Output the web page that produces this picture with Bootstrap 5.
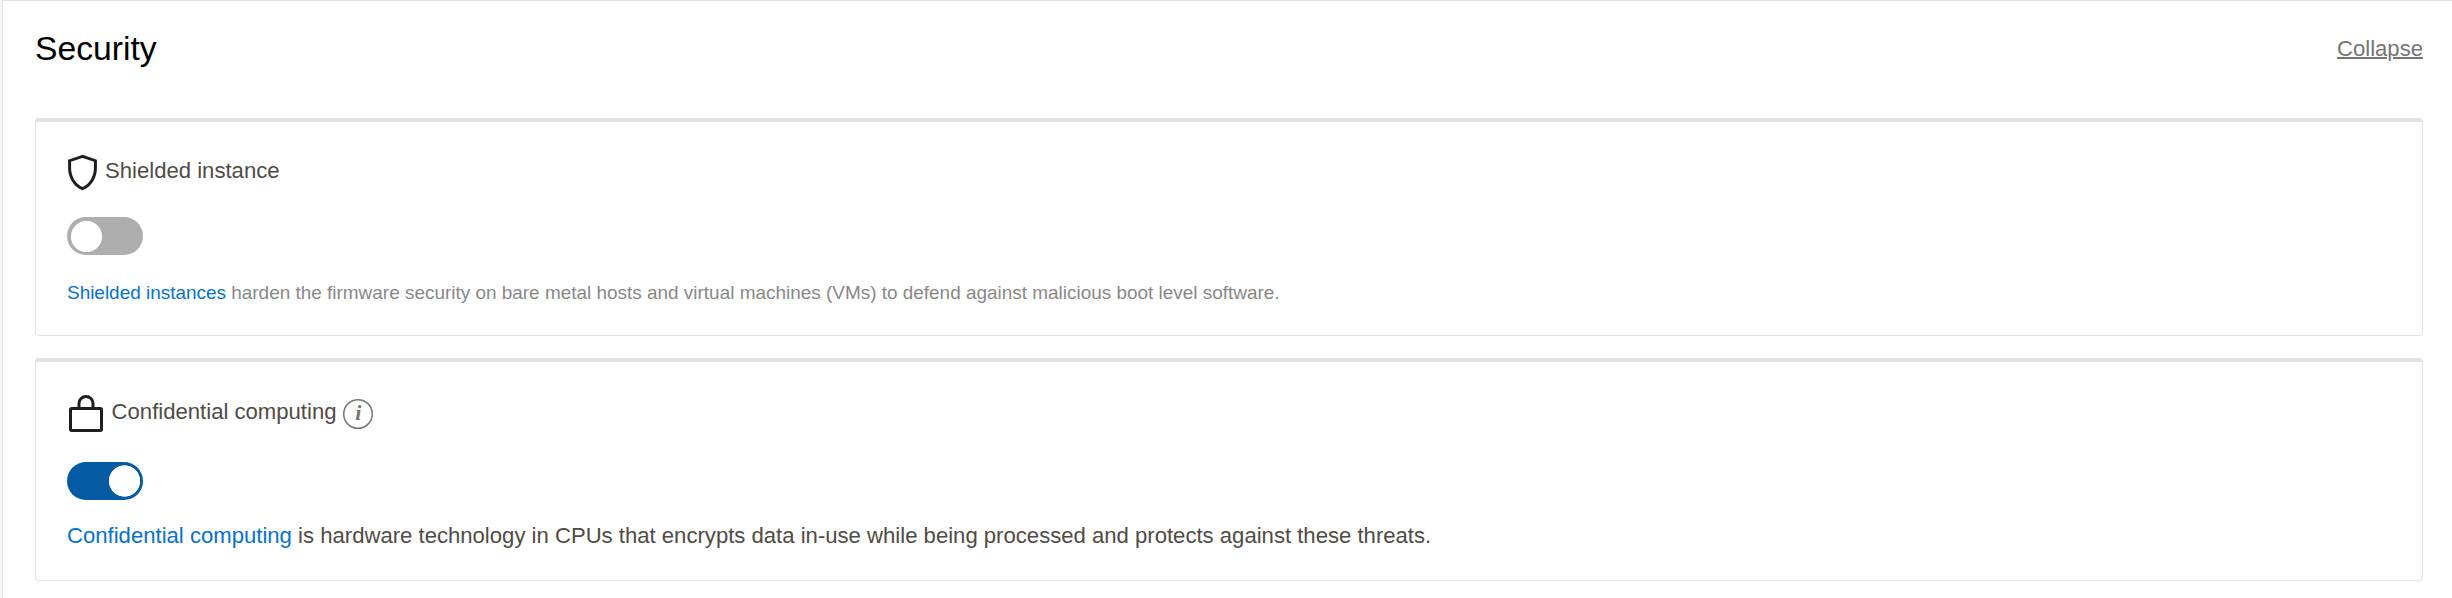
<!DOCTYPE html>
<html lang="en">
<head>
<meta charset="utf-8">
<title>Security</title>
<link href="https://cdn.jsdelivr.net/npm/bootstrap@5.3.0/dist/css/bootstrap.min.css" rel="stylesheet">
<style>
body { font-family: "Liberation Sans", Arial, sans-serif; font-size: 22.11px; line-height: 30px; color: #504b46; background: #f5f5f6; overflow: hidden; }
a { color: #0572ce; }
.panel { height: 598px; margin-left: 2px; border-left: 1px solid #dfe1e5; border-top: 1px solid #dfe1e5; background: #fff; padding: 0 29px 0 32px; }
.panel-head { height: 117px; padding-top: 28px; }
.panel-head h2 { font-size: 33.7px; line-height: 38px; color: #000; font-weight: 400; }
.collapse-link { color: #757575; margin-top: 5px; text-decoration-thickness: 2px; }
.opt { border: 1px solid #e0e2e5; border-top-width: 4px; border-radius: 4px; padding: 0 31px; }
.opt-shield { height: 218px; margin-bottom: 22px; }
.opt-lock { height: 223px; }
.opt-title { height: 38px; margin-top: 32px; }
.opt-shield .title-text { margin-top: 2px; }
.opt-lock .title-text { margin-top: 3px; }
.opt .form-switch .form-check-input { width: 76px; height: 38px; border: 0; border-radius: 19px; background: #aeaeae radial-gradient(circle at 19.5px 19.5px, #fff 15.2px, transparent 15.9px) 0 0 / 100% 100%; }
.opt .form-switch .form-check-input:checked { background-color: #045aa3; background-image: radial-gradient(circle at 57.5px 19px, #fff 15.3px, transparent 16px); }
.opt-shield .form-switch { margin-top: 25px; }
.opt-lock .form-switch { margin-top: 30px; }
.hint { font-size: 18.95px; color: #888; padding-top: 23px; }
.desc { padding-top: 21px; }
svg { display: block; flex: none; }
.info { margin: 4px 0 0 5px; }
.info text { font: italic bold 22px "Liberation Serif", serif; fill: #757575; }
</style>
</head>
<body>
<main class="panel">
  <header class="panel-head d-flex justify-content-between align-items-start">
    <h2 class="m-0">Security</h2>
    <a href="#" class="collapse-link">Collapse</a>
  </header>

  <section class="opt opt-shield">
    <div class="opt-title d-flex align-items-start">
      <svg width="38" height="38" viewBox="0 0 38 38" fill="none" stroke="#201e1c" stroke-width="3"><path d="M15.5 2.3L2.6 6.7V14C2.6 23 7.5 31.3 15.5 34.7C23.500 31.3 28.400 23 28.400 14V6.700Z"/></svg>
      <span class="title-text">Shielded instance</span>
    </div>
    <div class="form-check form-switch p-0 mb-0 d-flex">
      <input class="form-check-input m-0" type="checkbox" role="switch" aria-label="Shielded instance">
    </div>
    <p class="hint m-0"><a href="#" class="text-decoration-none">Shielded instances</a> harden the firmware security on bare metal hosts and virtual machines (VMs) to defend against malicious boot level software.</p>
  </section>

  <section class="opt opt-lock">
    <div class="opt-title d-flex align-items-start">
      <svg width="44.600" height="40" viewBox="0 0 44.600 40" fill="none" stroke="#201e1c" stroke-width="3"><rect x="3.5" y="14.5" width="31" height="22" rx="1.2"/><path d="M12 14V9.5a7 7 0 0 1 14 0V14"/></svg>
      <span class="title-text">Confidential computing</span>
      <svg class="info" width="32" height="32" viewBox="0 0 32 32"><circle cx="16" cy="16" r="14.3" fill="none" stroke="#757575" stroke-width="1.5"/><text x="16.3" y="22" text-anchor="middle">i</text></svg>
    </div>
    <div class="form-check form-switch p-0 mb-0 d-flex">
      <input class="form-check-input m-0" type="checkbox" role="switch" aria-label="Confidential computing" checked>
    </div>
    <p class="desc m-0"><a href="#" class="text-decoration-none">Confidential computing</a> is hardware technology in CPUs that encrypts data in-use while being processed and protects against these threats.</p>
  </section>
</main>
</body>
</html>
